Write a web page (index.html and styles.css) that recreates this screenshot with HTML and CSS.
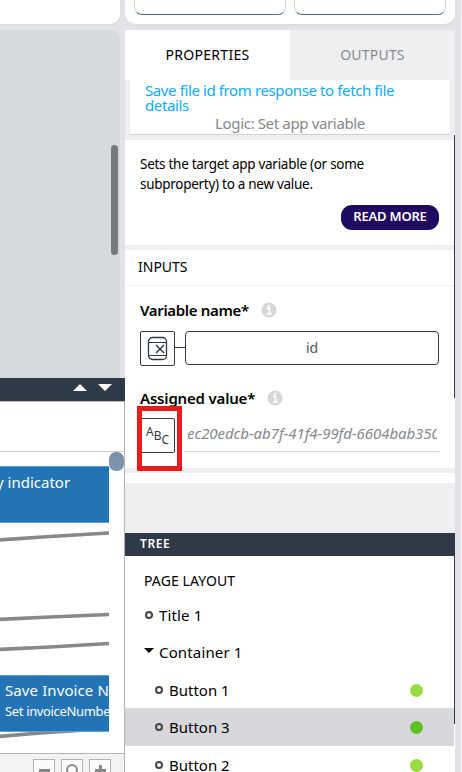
FILE: index.html
```
<!DOCTYPE html>
<html lang="en">
<head>
<meta charset="utf-8">
<title>App builder</title>
<link rel="stylesheet" href="styles.css">
</head>
<body>
<div class="app">
  <div class="left">
    <div class="top-card"></div>
    <div class="preview"><div class="scroll-thumb"></div></div>
    <section class="logic">
      <header class="logic-head">
        <svg width="40" height="8" viewBox="0 0 40 8"><path d="M0 7 7 0l7 7zM25 0h14l-7 7z" fill="#fff"/></svg>
      </header>
      <div class="logic-bar"></div>
      <div class="flow">
        <svg class="wires" width="109" height="301" viewBox="0 0 109 301"><g fill="none" stroke="#888" stroke-width="3.600"><path d="M-2 88 50 84.500 109 81"/><path d="M-2 167.500 50 165 109 162.500"/><path d="M-2 197.500 50 195 109 191.500"/><path d="M-2 284.500 40 281 100 277"/></g></svg>
        <div class="node node-a"><span class="node-title t-ind">y indicator</span></div>
        <div class="node node-b"><span class="node-title t-save">Save Invoice N</span><span class="node-sub">Set invoiceNumbe</span></div>
        <div class="flow-thumb"></div>
      </div>
      <footer class="zoombar">
        <span class="zoom"><svg width="20" height="20" viewBox="0 0 20 20"><path d="M5 10.500h11" stroke="#888" stroke-width="3"/></svg></span>
        <span class="zoom"><svg width="20" height="20" viewBox="0 0 20 20"><circle cx="10" cy="10" r="5" fill="none" stroke="#888" stroke-width="2"/></svg></span>
        <span class="zoom"><svg width="20" height="20" viewBox="0 0 20 20"><path d="M5 10.500h11M10.500 5v11" stroke="#888" stroke-width="3"/></svg></span>
      </footer>
    </section>
  </div>
  <div class="right">
    <div class="top-card buttons"><div class="stub"></div><div class="stub"></div></div>
    <nav class="tabs"><div class="tab active"><span>PROPERTIES</span></div><div class="tab"><span>OUTPUTS</span></div></nav>
    <div class="head-wrap"><div class="head">
      <div class="title">Save file id from response to fetch file<br>details</div>
      <div class="kind">Logic: Set app variable</div>
    </div></div>
    <div class="scroll-edge">
      <section class="about">
        <p>Sets the target app variable (or some<br>subproperty) to a new value.</p>
        <span class="more">READ MORE</span>
      </section>
      <h2 class="inputs">INPUTS</h2>
      <section class="form">
        <div class="label"><span class="l-var">Variable name*</span><svg width="16" height="16" viewBox="0 0 16 16"><circle cx="8" cy="8" r="7.500" fill="#d5d7da"/><path d="M6 6.500h2.500v5.500M6 12h4.500M8 3v2" stroke="#fff" stroke-width="1.800" fill="none"/></svg></div>
        <div class="field">
          <div class="type"><svg width="21" height="25" viewBox="0 0 21 25" fill="none" stroke="#303948"><rect x="1.500" y="1.500" width="18" height="22" rx="4" stroke-width="1.300"/><path d="M1.500 6.500h18M1.500 19.500h18" stroke-width="1"/><path d="m9 9 8 8M17 9l-8 8" stroke-width="1.500"/></svg></div>
          <div class="link"></div>
          <div class="value">id</div>
        </div>
        <div class="label second"><span class="l-ass">Assigned value*</span><svg width="16" height="16" viewBox="0 0 16 16"><circle cx="8" cy="8" r="7.500" fill="#d5d7da"/><path d="M6 6.500h2.500v5.500M6 12h4.500M8 3v2" stroke="#fff" stroke-width="1.800" fill="none"/></svg></div>
        <div class="field">
          <div class="type abc"><span>A</span><span>B</span><span>C</span><div class="marker"></div></div>
          <div class="text-value"><span>ec20edcb-ab7f-41f4-99fd-6604bab350</span></div>
        </div>
      </section>
      <div class="tail"></div>
    </div>
    <div class="spacer"></div>
    <header class="tree-head"><span>TREE</span></header>
    <section class="tree">
      <div class="row layout"><span>PAGE LAYOUT</span></div>
      <div class="row r-title"><i class="ring"></i><span>Title 1</span></div>
      <div class="row r-cont"><i class="caret"></i><span>Container 1</span></div>
      <div class="row child"><i class="ring"></i><span>Button 1</span><b class="dot"></b></div>
      <div class="row child selected"><i class="ring"></i><span>Button 3</span><b class="dot"></b></div>
      <div class="row child last"><i class="ring"></i><span>Button 2</span><b class="dot"></b></div>
      <div class="edge"></div>
    </section>
  </div>
  <div class="outer"></div>
</div>
</body>
</html>
```
FILE: styles.css
```
* { box-sizing: border-box; }
body { margin: 0; font-family: "Noto Sans", sans-serif; color: #000; font-size: 14px; }
span { white-space: nowrap; }
svg { display: block; flex: none; }
.app { width: 462px; height: 772px; display: flex; overflow: hidden; background: #e2e3e7; }
.left { width: 125px; flex: none; }
.right { width: 330px; flex: none; }
.outer { width: 7px; border-right: 1px solid #f6f6f7; }
.top-card { width: 120px; height: 24px; background: #fff; border-radius: 0 0 10px 0; box-shadow: 0 1px 2px #d5d7da; margin-bottom: 6px; }
.top-card.buttons { width: 330px; border-radius: 0 0 10px 10px; display: flex; gap: 8px; padding: 0 9px; }
.stub { flex: 1; height: 15px; border: 1px solid #cdd4dc; border-top: 0; border-bottom-color: #52698a; border-radius: 0 0 8px 8px; }
.preview { position: relative; width: 120px; height: 348px; background: #d4dadd; border-radius: 0 10px 0 0; }
.scroll-thumb { position: absolute; right: 2px; top: 115px; width: 7px; height: 110px; border-radius: 4px; background: #757a7d; }

.logic { height: 394px; display: flex; flex-direction: column; background: #fff; overflow: hidden; }
.logic-head { height: 23px; flex: none; background: #303948; display: flex; justify-content: flex-end; padding: 6px 12px 0 0; }
.logic-bar { height: 51px; flex: none; border: solid #b4b4b4; border-width: 1px 1px 0 0; border-bottom: 1px solid #ccc; }
.flow { position: relative; height: 301px; flex: none; border-right: 1px solid #b4b4b4; }
.wires { position: absolute; left: 0; top: 0; }
.node { position: absolute; left: 0; width: 109px; height: 57px; background: #2274b5; color: #fff; overflow: hidden; display: flex; flex-direction: column; border: solid #5f9fd0; border-width: 1px 0; }
.node-a { top: 14px; padding: 5px 0 0 0; }
.node-a .node-title { margin-left: -4px; }
.node-b { top: 223px; padding: 4px 0 0 5px; }
.node-title { font-size: 15px; line-height: 20px; }
.t-save { letter-spacing: 0.1px; }
.node-sub { font-size: 13px; line-height: 22px; letter-spacing: -0.35px; }
.flow-thumb { position: absolute; right: 0; top: 0; width: 15px; height: 19px; border-radius: 7px; background: #7b92ab; }
.zoombar { flex: 1; background: #f2f2f2; border-top: 1px solid #b4b4b4; border-right: 1px solid #b4b4b4; display: flex; gap: 6px; padding: 5px 0 0 33px; }
.zoom { width: 22px; height: 22px; border: 1px solid #b4b4b4; background: #fafafa; flex: none; }

.tabs { height: 50px; display: flex; }
.tab { width: 165px; display: flex; align-items: center; justify-content: center; background: #edeff1; color: #8a8c90; letter-spacing: 0.2px; padding-bottom: 1px; }
.tab.active { background: #fff; color: #000; border-radius: 2px 0 0 0; letter-spacing: 0.3px; }
.head-wrap { height: 60px; background: #edeff1; padding: 0 5px; }
.head { height: 55px; background: #fff; border-bottom: 1px solid #cfd2d6; padding: 3px 15px 0; }
.title { color: #0faaff; font-size: 15px; line-height: 15px; white-space: nowrap; letter-spacing: -0.39px; }
.kind { color: #85888c; font-size: 15px; line-height: 20px; text-align: center; letter-spacing: -0.35px; }

.scroll-edge { position: relative; height: 343px; background: #fff; }
.scroll-edge::after { content: ""; position: absolute; right: 0; top: -5px; width: 1px; height: 263px; background: #303948; }
.about { height: 110px; border-bottom: 5px solid #edeff1; padding: 14px 16px 0 15px; display: flex; flex-direction: column; }
.about p { margin: 0; font-size: 13.5px; line-height: 20px; white-space: nowrap; letter-spacing: -0.28px; }
.more { align-self: flex-end; width: 98px; height: 25px; margin-top: 11px; border-radius: 11px; background: #1f0a61; color: #fff; font-size: 13px; font-weight: 600; line-height: 23px; text-align: center; letter-spacing: -0.2px; }
.inputs { margin: 0; height: 36px; border-bottom: 1px solid #f0f1f3; padding-left: 13px; font-size: 14px; font-weight: 400; line-height: 34px; }
.form { height: 182px; padding: 13px 16px 0 15px; }
.label { height: 22px; display: flex; align-items: center; justify-content: flex-start; gap: 12px; font-weight: 600; font-size: 15px; }
.l-var { letter-spacing: -0.34px; }
.l-ass { letter-spacing: -0.18px; }
.label.second { margin-top: 21px; height: 22px; }
.field { height: 35px; display: flex; margin-top: 10px; align-items: flex-start; }
.second + .field { margin-top: 9px; }
.type { position: relative; width: 35px; height: 35px; flex: none; border: 1px solid #303948; border-radius: 2px; display: flex; align-items: center; justify-content: center; padding-right: 1px; }
.link { width: 10px; height: 1px; margin-top: 16px; background: #303948; }
.value { flex: 1; height: 34px; border: 1px solid #303948; border-radius: 4px; text-align: center; color: #54585e; line-height: 31px; font-size: 14px; }
.abc { font-size: 12px; line-height: 14px; color: #303948; padding: 0; }
.abc span:nth-child(1) { margin-top: -8px; }
.abc span:nth-child(3) { margin-top: 8px; }
.marker { position: absolute; left: -4px; top: -13px; width: 45px; height: 65px; border: 5px solid #e81b1e; }
.text-value { width: 254px; margin-left: 10px; height: 34px; border-bottom: 1px solid #d5d7da; font-style: italic; color: #85888c; padding: 0 2px 0 2px; line-height: 31px; font-size: 15px; }
.text-value span { display: block; overflow: hidden; letter-spacing: -0.06px; }
.tail { height: 15px; border-top: 5px solid #edeff1; }
.spacer { height: 50px; background: #edeff1; }
.tree-head { height: 23px; background: #303948; color: #fff; font-size: 12px; font-weight: 600; line-height: 22px; padding-left: 15px; letter-spacing: 0.6px; }
.tree { position: relative; height: 216px; background: #fff; padding-top: 6px; font-size: 15px; overflow: hidden; }
.row { display: flex; align-items: center; height: 37px; }
.layout { padding-left: 19px; font-size: 14px; letter-spacing: 0.1px; }
.r-title, .r-cont { padding-left: 20px; letter-spacing: 0.15px; }
.r-title { height: 32px; }
.r-cont { height: 41px; }
.child { padding: 0 32px 0 30px; height: 36px; }
.child.selected { height: 38px; background: #d7d8dc; margin-right: 1px; padding-right: 31px; }
.child.last { height: 38px; }
.ring { width: 8px; height: 8px; border: 2px solid #444; border-radius: 50%; margin-right: 6px; flex: none; }
.caret { border: solid transparent; border-width: 5px 5px 0; border-top-color: #000; margin: 0 5px 2px -1px; }
.dot { width: 13px; height: 13px; border-radius: 50%; background: #97dd40; margin-left: auto; }
.selected .dot { background: #5dc122; }
.edge { position: absolute; right: 0; top: 0; width: 1px; height: 168px; background: #303948; }
```
